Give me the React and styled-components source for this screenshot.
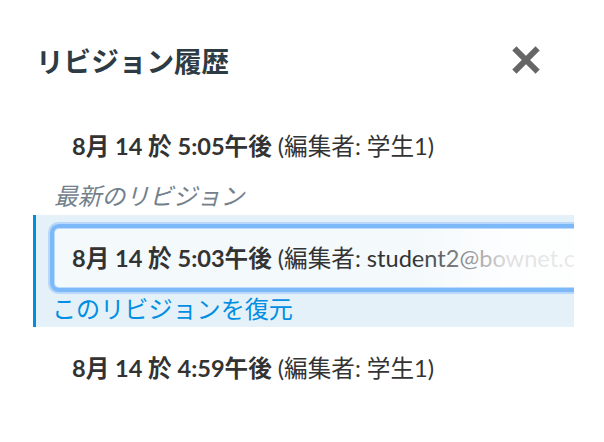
import React from 'react';
import styled, { createGlobalStyle } from 'styled-components';

const GlobalStyle = createGlobalStyle`
  html, body {
    margin: 0;
    padding: 0;
    background: #ffffff;
  }
  body {
    font-family: Lato, "Noto Sans CJK JP", sans-serif;
    color: #2d3b45;
  }
`;

const revisions = [
  { id: 1, date: '8月 14 於 5:05午後', editor: '学生1', latest: true },
  { id: 2, date: '8月 14 於 5:03午後', editor: 'student2@bownet.com', selected: true },
  { id: 3, date: '8月 14 於 4:59午後', editor: '学生1' },
];

const App = () => (
  <>
    <GlobalStyle />
    <Tray>
      <Header>
        <Title>リビジョン履歴</Title>
        <CloseButton aria-label="閉じる">
          <svg width="28" height="28" viewBox="0 0 28 28">
            <path d="M4.5 4.5 L23.5 23.5 M23.5 4.5 L4.5 23.5" stroke="#666666" strokeWidth="6" strokeLinecap="square" />
          </svg>
        </CloseButton>
      </Header>
      <RevisionList>
        {revisions.map((rev) => (
          <RevisionItem key={rev.id} selected={rev.selected}>
            <RevisionButton selected={rev.selected}>
              <strong>{rev.date}</strong> (編集者: {rev.editor})
            </RevisionButton>
            {rev.latest && <LatestLabel>最新のリビジョン</LatestLabel>}
            {rev.selected && <RestoreLink href="#">このリビジョンを復元</RestoreLink>}
          </RevisionItem>
        ))}
      </RevisionList>
    </Tray>
  </>
);

const Tray = styled.div`
  width: 574px;
  overflow: hidden;
  padding-top: 44px;
`;

const Header = styled.div`
  display: flex;
  align-items: center;
  justify-content: space-between;
  padding: 0 34px 0 36px;
  height: 32px;
`;

const Title = styled.h1`
  margin: 0;
  font-size: 27.6px;
  line-height: 32px;
  font-weight: 700;
  color: #2d3b45;
  transform: translateY(2px);
`;

const CloseButton = styled.button`
  border: none;
  background: none;
  padding: 0;
  display: flex;
  cursor: pointer;
`;

const RevisionList = styled.ul`
  list-style: none;
  margin: 41px 0 0;
  padding: 0 0 0 33px;
`;

const RevisionItem = styled.li`
  border-left: 3px solid ${(p) => (p.selected ? '#008ee2' : 'transparent')};
  background: ${(p) => (p.selected ? '#e4f1f8' : 'transparent')};
  padding: ${(p) => (p.selected ? '14px 0 3px 16px' : '0 0 4px 16px')};
  margin-bottom: ${(p) => (p.selected ? '12px' : '0')};
  overflow: hidden;
`;

const RevisionButton = styled.div`
  position: relative;
  box-sizing: border-box;
  height: 58px;
  line-height: 58px;
  margin-left: 3px;
  margin-right: -80px;
  padding-left: 17px;
  white-space: nowrap;
  font-size: 23.6px;
  color: #333333;
  border-radius: 4px;
  background: ${(p) => (p.selected ? '#f4f9fc' : 'transparent')};
  box-shadow: ${(p) => (p.selected
    ? '0 0 0 1px #bcdcfc, 0 0 0 5px #7db9f9, 0 0 0 7px #b7d8fb'
    : 'none')};

  strong {
    font-weight: 700;
  }

  ${(p) => p.selected && `
    &::after {
      content: '';
      position: absolute;
      top: 0;
      bottom: 0;
      right: 0;
      width: 240px;
      background: linear-gradient(to right, rgba(255,255,255,0), rgba(255,255,255,0.85) 40%, rgba(255,255,255,0.95));
    }
  `}
`;

const LatestLabel = styled.div`
  margin-top: 6px;
  padding-left: 2px;
  line-height: 30px;
  font-size: 23.8px;
  font-style: italic;
  color: #73818c;
`;

const RestoreLink = styled.a`
  display: block;
  margin-top: 7px;
  line-height: 30px;
  font-size: 24.1px;
  color: #008ee2;
  text-decoration: none;
`;

export default App;
